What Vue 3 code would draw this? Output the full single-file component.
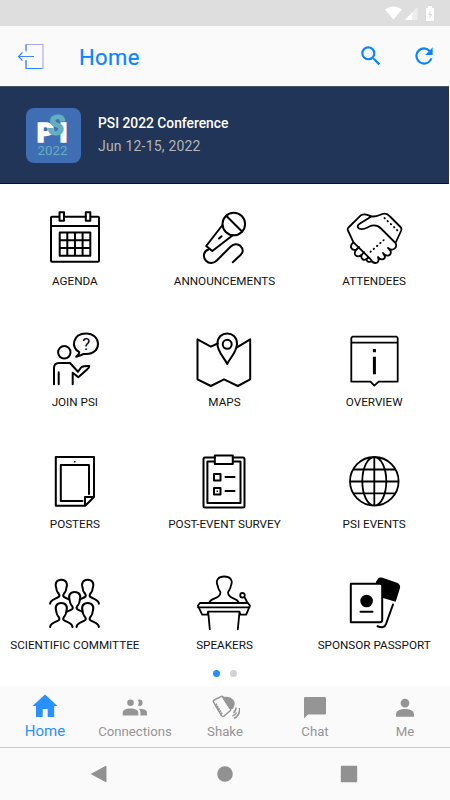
<template>
  <div class="app">
    <div class="status-bar">
      <svg class="status-icons" viewBox="0 0 54 18">
        <path d="M0 4.500Q8.500-1.500 17 4.500L8.500 14.500Z" fill="#fff" />
        <path d="M32.500 2V15H20Z" fill="#eee" />
        <path d="M27 7.500V15H20Z" fill="#fff" />
        <path d="M41 3h2V1h4v2h2v13h-8Z" fill="#fff" />
        <path d="M46 5l-3 5h2l-1 4 3.500-5h-2Z" fill="#ddd" />
      </svg>
    </div>

    <header class="header">
      <svg class="exit-icon" viewBox="0 0 28 28" fill="none">
        <path d="M9 7V1.500H26V25.500H9V17" stroke="#a9a6ef" stroke-width="1.100" />
        <path d="M9 8.500V1.500M9 17v8.500H25" stroke="#2b8dff" stroke-width="1.100" />
        <path d="M17 13.500H1.500M5.500 9.500L1.500 13.500l4 4" stroke="#3d86ff" stroke-width="1.200" />
      </svg>
      <h1 class="title">Home</h1>
      <button class="icon-button" aria-label="Search">
        <svg viewBox="0 0 24 24" fill="#0a84ff"><path d="M15.500 14h-.79l-.28-.27A6.471 6.471 0 0 0 16 9.500 6.500 6.500 0 1 0 9.500 16c1.610 0 3.090-.59 4.230-1.570l.27.28v.79l5 4.990L20.490 19l-4.990-5zm-6 0C7.010 14 5 11.990 5 9.500S7.010 5 9.500 5 14 7.010 14 9.500 11.990 14 9.500 14z" /></svg>
      </button>
      <button class="icon-button refresh" aria-label="Refresh">
        <svg viewBox="0 0 24 24" fill="#0a84ff"><path d="M17.650 6.350A7.958 7.958 0 0 0 12 4a8 8 0 1 0 7.730 10h-2.080A5.990 5.990 0 0 1 12 18a6 6 0 1 1 0-12c1.660 0 3.140.69 4.220 1.780L13 11h7V4z" /></svg>
      </button>
    </header>

    <section class="banner">
      <svg class="logo" viewBox="0 0 55 55">
        <rect width="55" height="55" rx="8" fill="#3f6eb5" />
        <g class="logo-letters">
          <text x="11" y="34" font-size="26" fill="#fff" stroke="#fff" stroke-width="1.500">P</text>
          <text x="33.500" y="34" font-size="26" fill="#fff" stroke="#fff" stroke-width="1.500">I</text>
          <text x="22" y="27" font-size="27" font-style="italic" fill="#63afbf" stroke="#63afbf" stroke-width="1">S</text>
        </g>
        <text class="logo-year" x="11.500" y="47" textLength="30" lengthAdjust="spacingAndGlyphs">2022</text>
      </svg>
      <div>
        <div class="event-name">PSI 2022 Conference</div>
        <div class="event-date">Jun 12-15, 2022</div>
      </div>
    </section>

    <main class="grid">
      <button v-for="item in items" :key="item.label" class="tile">
        <svg class="tile-icon" viewBox="0 0 60 60">
          <path v-for="(d, i) in item.paths" :key="i" :d="d" />
          <path v-if="item.thin" :d="item.thin" class="thin" />
          <path v-if="item.solid" :d="item.solid" class="solid" />
          <template v-if="item.people">
            <path v-for="(p, i) in item.people" :key="'p' + i" :d="person" :transform="`translate(${p[0]} ${p[1]})`" class="person" />
          </template>
          <text v-if="item.mark" x="41.300" y="19.700" text-anchor="middle">{{ item.mark }}</text>
        </svg>
        <span class="tile-label">{{ item.label }}</span>
      </button>
    </main>

    <div class="pager">
      <span class="dot active"></span>
      <span class="dot"></span>
    </div>

    <nav class="tabs">
      <button v-for="tab in tabs" :key="tab.label" class="tab" :class="{ active: tab.label === current }" @click="current = tab.label">
        <svg class="tab-icon" viewBox="0 0 30 30">
          <path :d="tab.fill" fill="currentColor" />
          <path v-if="tab.line" :d="tab.line" fill="none" stroke="currentColor" stroke-width="1.500" />
          <path v-if="tab.dashed" :d="tab.dashed" fill="none" stroke="currentColor" stroke-width="2.500" stroke-dasharray="1.800 .8" />
        </svg>
        <span class="tab-label">{{ tab.label }}</span>
      </button>
    </nav>

    <div class="system-nav">
      <svg viewBox="0 0 18 18"><path d="M16 1.200v15.600L1.500 9Z" stroke="#919191" stroke-linejoin="round" /></svg>
      <svg class="home-key" viewBox="0 0 18 18"><circle cx="9" cy="9" r="7.800" /></svg>
      <svg viewBox="0 0 18 18"><rect x=".8" y=".8" width="16.400" height="16.400" rx="1" /></svg>
    </div>
  </div>
</template>

<script setup>
import { ref } from 'vue'

const current = ref('Home')

// head and shoulders, drawn around the top of the head
const person = 'M-11.200 24C-10.500 19.500-6 19.500-3 17.500Q-1.300 16.500-2.300 14.500C-3 13-4.800 12.500-5 8.500C-6.800 3.500-4.500 0 0 0S6.800 3.500 5 8.500C4.800 12.500 3 13 2.300 14.500Q1.300 16.500 3 17.500C6 19.500 10.500 19.500 11.200 24'

const items = [
  {
    label: 'AGENDA',
    paths: [
      'M14 8.700H7Q6 8.700 6 9.700V52.700Q6 53.700 7 53.700H53Q54 53.700 54 52.700V9.700Q54 8.700 53 8.700H46M19.500 8.700H40.500M6 18H54',
      'M14.500 4.200h4.500v8.500h-4.500ZM40.800 4.200h4.500v8.500h-4.500Z',
      'M14.700 24.500H45.300V47.700H14.700ZM22.300 24.500V47.700M30 24.500V47.700M37.600 24.500V47.700M14.700 32.200H45.300M14.700 40H45.300'
    ]
  },
  {
    label: 'ANNOUNCEMENTS',
    paths: [
      'M28.500 16a11.300 11.300 0 1 0 22.600 0a11.300 11.300 0 1 0-22.600 0',
      'M32.200 7.700L48 23.500M28.500 17L12.200 38L18.300 43L38.800 27.300M25 30.500L27.600 28.300',
      'M14.500 41.500C9.500 43 8.500 49 12 52.700C15 56 19.500 55.700 22.800 52.500L36.500 38.700C39 36 43.500 35 46.500 38C49.500 41 49.500 44.500 46.500 47L38.800 54.300'
    ]
  },
  {
    label: 'ATTENDEES',
    thin: 'M27.700 8.300C24 7.500 21 4.800 17 7.200L4.500 19.500Q3 21 4.200 23L9.500 34.300L26.700 51.300Q29 56 33 54.700Q35.500 53.500 34 49C37 53 41 51.500 41 48.500L39 45C43 50 48 47 46.500 43L44 40C48 44 54 40 51.500 35L37 20.500C34 17.500 31 17 27.700 17.700C23 19 19.500 23 15 20.500Q12 18 16 15.500L27.700 8.300C33 9.500 37 5.500 41 5.700Q43.500 5.700 46 8.500L56.500 19Q58 20.500 57 23L51.500 35M9.500 34.300C5 38 7 43 12.500 41.500L15 39M12.500 41.500C8 46 13 51 18 46.500L20 44M18 46.500C16 51 20 54 24.500 49.500M22.500 51Q22.500 55 28 53.500M26.500 43.800l.3-.3M29.700 41l.3-.3M33 38l.3-.3M36.200 35.200l.3-.3M39.400 32.400l.3-.3M40.500 10l.3.4M43.600 13l.3.400M46.800 16l.3.400M50 19l.3.400M53 22l.3.400'
  },
  {
    label: 'JOIN PSI',
    mark: '?',
    paths: [
      'M13.100 22.300a6.200 6.200 0 1 0 12.400 0a6.200 6.200 0 1 0-12.400 0',
      'M9 54.300V38Q9 33 14 33H25L33 41.700L36.500 37Q39 35.800 44.300 36Q44.500 37.500 42 39.500L33.300 47.300L27.700 42.700V54.300M13.700 42.300V54.300',
      'M34.300 22.200C25.500 18 27.500 3.400 41 3.400C56.500 3.400 57.500 24 41 24C38.500 24 38 23.500 36.500 25L31.200 26.700Q34 25 34.300 22.200Z'
    ]
  },
  {
    label: 'MAPS',
    paths: [
      'M23.800 13.500L16.800 16.700L3.500 9.300V49.300L16.800 56L30 49.300L43.800 56L56.200 49.300V9.300L43 17.300',
      'M33.200 34C30 27 23.400 22 23.400 13.800C23.400 0 43 0 43 13.800C43 22 36.500 27 33.200 34Z',
      'M28.700 14.300a4.500 4.500 0 1 0 9 0a4.500 4.500 0 1 0-9 0'
    ]
  },
  {
    label: 'OVERVIEW',
    thin: 'M8.500 6.700H52.500L53.700 8V51.700H34.700L30.300 55.700L26.500 51.700H7.300V8ZM7.300 12.700H53.700',
    solid: 'M28.900 19h3v3.300h-3ZM28.900 26.700h3v17.600h-3Z'
  },
  {
    label: 'POSTERS',
    paths: ['M10.800 6H49V46L40.200 54.700H10.800ZM40 54V46H49', 'M44 43V14H15.800V50H37.500'],
    solid: 'M29 10h1.500v1.500h-1.500Z'
  },
  {
    label: 'POST-EVENT SURVEY',
    paths: [
      'M20.800 6.500H11Q9.500 6.500 9.500 8V55Q9.500 56.500 11 56.500H49Q50.500 56.500 50.500 55V8Q50.500 6.500 49 6.500H38.800',
      'M20.800 10.500H13.400V52H46.500V10.500H38.800M20.800 4.500H38.800V13H20.800Z',
      'M20 23H26.500V29.500H20ZM20 37H26.500V43.500H20ZM31.500 26H40.500M31.500 40H40.500'
    ],
    solid: 'M22.500 39.500h1.500v1.500h-1.500Z'
  },
  {
    label: 'PSI EVENTS',
    thin: 'M6 30.300a24.300 24.300 0 1 0 48.600 0a24.300 24.300 0 1 0-48.600 0M18.300 30.300a12 24.300 0 1 0 24 0a12 24.300 0 1 0-24 0M30.300 6V54.600M6 30.500H54.600M9.500 18.500H51M9.500 42.300H51'
  },
  {
    label: 'SCIENTIFIC COMMITTEE',
    people: [[16.300, 6.700], [42.700, 6.700], [29.700, 19], [16.300, 30], [42.700, 30]]
  },
  {
    label: 'SPEAKERS',
    thin: 'M15.500 29C18 24 26 26.500 26.500 19.500C25.500 17 24 16.500 23.800 13C21 7 24.500 3.500 30.300 3.500C36 3.500 39.500 7 36.800 13C36.500 16.500 35 17 34 19.500C34.500 26.500 42 24 44.500 29M6 30H54L56 32.700L52.200 41.700H46.500L45.500 38.700H14L13.500 41.700H8.200L3.800 32.700ZM4 34.300H55.500M14.200 39L15.800 56.300M45.500 39L43.800 56.300M46.200 22.300a2.300 2.300 0 1 0 4.600 0a2.300 2.300 0 1 0-4.600 0M50.500 24L53.500 30'
  },
  {
    label: 'SPONSOR PASSPORT',
    paths: ['M6.800 10.800H36Q38.200 10.800 38.200 13V47Q38.200 49.300 36 49.300H6.800ZM16.500 38.700H28.500M49 31.500L42 51Q40.500 56 33.500 53.300'],
    solid: 'M16.300 28a6.300 6.300 0 1 0 12.600 0a6.300 6.300 0 1 0-12.600 0M32 10V8.700L34 5.800Q35.500 4 38.500 4.800L53 9.700Q56.800 11.500 56 15L51.700 28.700L39 25V13Q39 10 36 10Z'
  }
]

const tabs = [
  { label: 'Home', fill: 'M15 4.500L27.500 16H24.200V27H17.700V19H12.700V27H6V16H2.500Z' },
  {
    label: 'Connections',
    fill: 'M10.500 16a3.300 3.300 0 1 0 0-6.600a3.300 3.300 0 0 0 0 6.600ZM19.300 16a3.300 3.300 0 1 0 0-6.600q-1.200 0-1.500.4q1.900 2.700 0 5.800q.5.400 1.500.4ZM2.700 25.500V22.500C2.700 17.300 18.300 17.300 18.300 22.500V25.500ZM20.400 25.500V22.300Q20.300 20 18.700 18.700Q27 18.800 27 22.500V25.500Z'
  },
  {
    label: 'Shake',
    fill: 'M12 7Q20 5.500 23.500 10Q26.500 14 22.500 19L19.500 19L14.500 11.500Z',
    line: 'M10.500 6.800L5 9.500Q2.800 10.500 3.500 12M10.500 6.800Q12.200 5.800 13 7L20.500 18.500Q21.200 20 20 21L14 26M23.300 23Q26 21 26 17.500M22.500 26Q25.500 24.800 26.700 22.500M24 28.500Q30.300 25 29.500 18M3.500 12L11 25Q12.500 27.500 15 25.500',
    dashed: 'M5.500 14L12 25'
  },
  { label: 'Chat', fill: 'M5.300 7H24.700Q26 7 26 8.300V23.200Q26 24.500 24.700 24.500H8L4 28.500V8.300Q4 7 5.300 7Z' },
  { label: 'Me', fill: 'M15 17.500a4.400 4.400 0 1 0 0-8.800a4.400 4.400 0 0 0 0 8.800ZM6 26.700V24.200C6 17.400 24 17.400 24 24.200V26.700Z' }
]
</script>

<style>
body {
  margin: 0;
  background: #fff;
}
</style>

<style scoped>
.app {
  width: 450px;
  height: 800px;
  display: flex;
  flex-direction: column;
  overflow: hidden;
  background: #fff;
  font-family: Roboto, "Liberation Sans", sans-serif;
}

button {
  border: 0;
  padding: 0;
  background: none;
  font-family: inherit;
  cursor: pointer;
}

.status-bar {
  height: 26px;
  flex: none;
  display: flex;
  justify-content: flex-end;
  padding: 5px 11px 0 0;
  box-sizing: border-box;
  background: #dedede;
}

.status-icons {
  width: 54px;
  height: 18px;
}

.header {
  height: 60px;
  flex: none;
  display: flex;
  align-items: center;
  padding: 0 13px 0 17px;
  background: #fafafa;
}

.exit-icon {
  width: 28px;
  height: 28px;
  margin-top: 2px;
}

.title {
  flex: 1;
  margin: 3px 0 0 34px;
  color: #0a84ff;
  font-size: 22px;
  font-weight: 400;
  letter-spacing: 0.4px;
  -webkit-text-stroke: 0.2px #0a84ff;
}

.icon-button svg {
  display: block;
  width: 26px;
  height: 26px;
}

.icon-button.refresh {
  margin-left: 27px;
}

.banner {
  width: 449px;
  height: 98px;
  flex: none;
  box-sizing: border-box;
  display: flex;
  align-items: center;
  padding-left: 26px;
  gap: 17px;
  background: #203557;
  border-top: 1px solid #475569;
  border-bottom: 1px solid #04103c;
}

.logo {
  width: 55px;
  height: 55px;
}

.logo-letters {
  font-family: Roboto, sans-serif;
  font-weight: 900;
}

.logo-year {
  font-size: 13.5px;
  fill: #63afbf;
}

.event-name {
  color: #fff;
  font-size: 13.8px;
  font-weight: 500;
  line-height: 23px;
}

.event-date {
  color: #b4b5b9;
  font-size: 14px;
  line-height: 23px;
  letter-spacing: 0.2px;
}

.grid {
  width: 449px;
  display: grid;
  grid-template-columns: repeat(3, 1fr);
  grid-template-rows: repeat(4, 121.6px);
}

.tile {
  display: flex;
  flex-direction: column;
  align-items: center;
  padding-top: 24px;
}

.tile-icon {
  width: 60px;
  height: 60px;
  fill: none;
  stroke: #000;
  stroke-width: 2;
  stroke-linecap: round;
  stroke-linejoin: round;
}

.thin {
  stroke-width: 1.8;
}

.solid {
  fill: #000;
  stroke: none;
}

.person {
  fill: #fff;
}

.tile-icon text {
  fill: #000;
  stroke: none;
  font-size: 17px;
  font-weight: 400;
}

.tile-label {
  margin-top: 4.6px;
  color: #111;
  font-size: 11.7px;
  line-height: 16px;
  white-space: nowrap;
}

.pager {
  height: 16px;
  display: flex;
  justify-content: center;
  gap: 10px;
}

.dot {
  width: 7px;
  height: 7px;
  border-radius: 50%;
  background: #d1d1d6;
}

.dot.active {
  background: #2390ff;
}

.tabs {
  height: 62px;
  flex: none;
  box-sizing: border-box;
  display: grid;
  grid-template-columns: repeat(5, 1fr);
  background: #fafafa;
  border-bottom: 1px solid #c8c8c8;
}

.tab {
  display: flex;
  flex-direction: column;
  align-items: center;
  padding-top: 4px;
  color: #959595;
}

.tab-icon {
  width: 30px;
  height: 30px;
}

.tab-label {
  margin-top: 3px;
  font-size: 13.2px;
  font-weight: 400;
  line-height: 18px;
}

.tab.active {
  color: #2990ff;
}

.tab.active .tab-label {
  margin-top: 2px;
  font-size: 15px;
}

.system-nav {
  height: 52px;
  display: flex;
  justify-content: space-between;
  align-items: center;
  padding: 0 92px 0 90px;
  background: #fafafa;
}

.system-nav svg {
  width: 18px;
  height: 18px;
  fill: #919191;
}

.system-nav .home-key {
  margin-left: 2px;
}
</style>
